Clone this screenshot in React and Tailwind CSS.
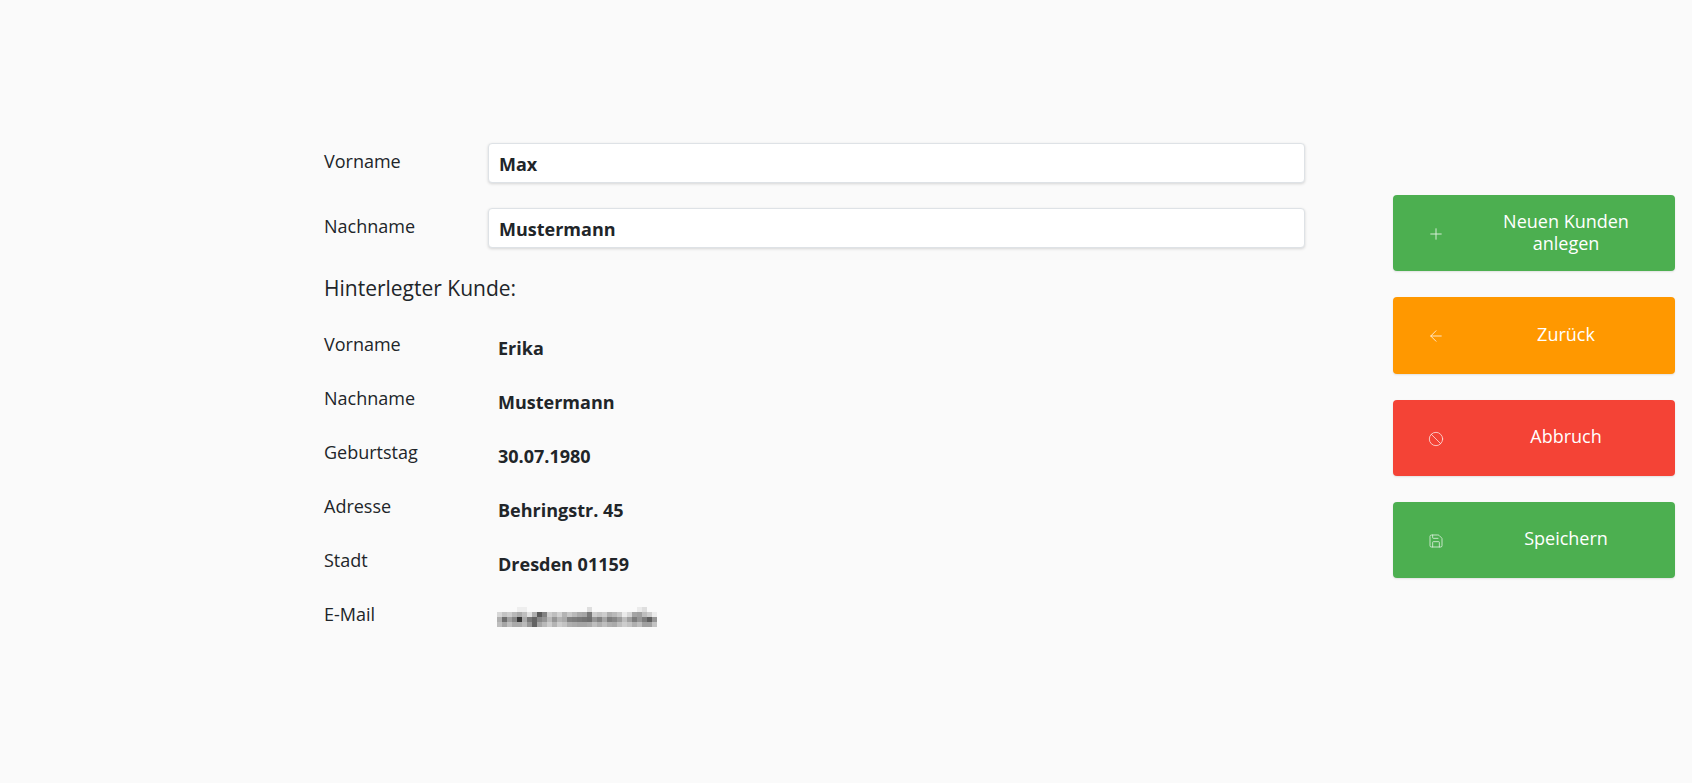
import { Plus, ArrowLeft, Ban, Save } from 'lucide-react';

// verpixelte E-Mail-Adresse, Grauwerte je Zeile
const pixel = [
  [250, 250, 250, 250, 238, 238, 250, 250, 250, 250, 250, 250, 250, 250, 250, 250, 250, 250, 222, 250, 250, 250, 250, 250, 250, 250, 250, 250, 235, 222, 250, 250],
  [215, 195, 205, 185, 170, 190, 225, 175, 90, 130, 205, 190, 210, 180, 200, 185, 170, 165, 120, 205, 195, 205, 175, 185, 200, 235, 215, 165, 160, 190, 205, 235],
  [175, 110, 160, 135, 55, 170, 120, 100, 135, 150, 185, 150, 180, 170, 130, 125, 120, 115, 110, 150, 130, 165, 125, 135, 155, 190, 160, 125, 150, 125, 95, 150],
  [190, 165, 190, 170, 170, 185, 150, 100, 165, 185, 205, 180, 205, 195, 175, 170, 165, 165, 170, 190, 175, 190, 175, 170, 190, 205, 195, 175, 190, 160, 160, 195],
];

const PixelMail = () => (
  <svg width="160" height="20" viewBox="0 0 32 4" shapeRendering="crispEdges" className="block">
    {pixel.map((zeile, y) =>
      zeile.map((g, x) => <rect key={`${x}-${y}`} x={x} y={y} width="1" height="1" fill={`rgb(${g},${g},${g})`} />)
    )}
  </svg>
);

const InputRow = ({ label, value, className }) => (
  <div className={`flex ${className}`}>
    <div className="w-[164px] shrink-0 pt-[5px] text-[18px] leading-[27px] text-[#212529]">{label}</div>
    <div className="h-[40px] flex-1 rounded-[4px] border border-[#dee2e6] bg-white pl-[10px] pt-[1px] text-[18px] font-bold leading-[38px] text-[#212529] shadow-[0_1px_3px_rgba(0,0,0,0.15)]">
      {value}
    </div>
  </div>
);

const DataRow = ({ label, value, children }) => (
  <div className="flex h-[54px]">
    <div className="-mt-[1px] w-[174px] shrink-0 text-[18px] leading-[27px] text-[#212529]">{label}</div>
    <div className="pt-[3px] text-[18px] font-bold leading-[27px] text-[#212529]">{value}{children}</div>
  </div>
);

const ActionButton = ({ icon: Icon, size, color, children }) => (
  <button type="button" className={`flex h-[76.25px] w-[282px] items-center rounded-[4px] text-white shadow-[0_1px_2px_rgba(0,0,0,0.1)] ${color}`}>
    <span className="flex w-[85px] shrink-0 justify-center pt-[2px] opacity-85">
      <Icon size={size} strokeWidth={1.2} />
    </span>
    <span className="flex-1 px-[24px] pr-[45px] pb-[3px] text-center text-[18px] leading-[22px]">{children}</span>
  </button>
);

export default function App() {
  return (
    <div className="flex h-[783px] bg-[#fafafa] font-['Open_Sans',sans-serif]">
      <div className="ml-[324px] w-[981px] pt-[143px]">
        <InputRow label="Vorname" value="Max" className="mb-[25px]" />
        <InputRow label="Nachname" value="Mustermann" className="mb-[25px]" />
        <h2 className="mb-[29px] text-[21px] leading-[30px] text-[#212529]">Hinterlegter Kunde:</h2>
        <DataRow label="Vorname" value="Erika" />
        <DataRow label="Nachname" value="Mustermann" />
        <DataRow label="Geburtstag" value="30.07.1980" />
        <DataRow label="Adresse" value="Behringstr. 45" />
        <DataRow label="Stadt" value="Dresden 01159" />
        <DataRow label="E-Mail">
          <div className="-ml-[1px] pt-[2px]"><PixelMail /></div>
        </DataRow>
      </div>
      <div className="ml-[88px] flex flex-col gap-[26px] pt-[195px]">
        <ActionButton icon={Plus} size={18} color="bg-[#4caf50]">Neuen Kunden anlegen</ActionButton>
        <ActionButton icon={ArrowLeft} size={18} color="bg-[#ff9800]">Zurück</ActionButton>
        <ActionButton icon={Ban} size={16} color="bg-[#f44336]">Abbruch</ActionButton>
        <ActionButton icon={Save} size={16} color="bg-[#4caf50]">Speichern</ActionButton>
      </div>
    </div>
  );
}
